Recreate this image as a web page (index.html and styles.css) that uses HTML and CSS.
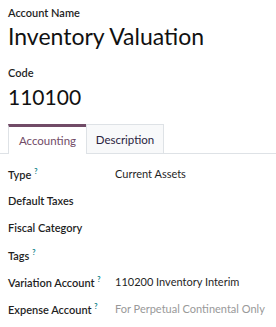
FILE: index.html
```html
<!DOCTYPE html>
<html lang="en">
<head>
  <meta charset="UTF-8" />
  <title>Account</title>
  <link rel="stylesheet" href="styles.css">
</head>
<body>
  <div class="sheet">
    <div class="field-label">Account Name</div>
    <div class="title">Inventory Valuation</div>

    <div class="field-label code-label">Code</div>
    <div class="code">110100</div>

    <!-- tabs -->
    <div class="tabs">
      <div class="tab active">Accounting</div>
      <div class="tab">Description</div>
    </div>

    <div class="rows">
      <div class="row">
        <div class="label">Type <sup>?</sup></div>
        <div class="value">Current Assets</div>
      </div>
      <div class="row">
        <div class="label">Default Taxes</div>
        <div class="value"></div>
      </div>
      <div class="row">
        <div class="label">Fiscal Category</div>
        <div class="value"></div>
      </div>
      <div class="row">
        <div class="label">Tags <sup>?</sup></div>
        <div class="value"></div>
      </div>
      <div class="row">
        <div class="label">Variation Account <sup>?</sup></div>
        <div class="value">110200 Inventory Interim</div>
      </div>
      <div class="row">
        <div class="label">Expense Account <sup>?</sup></div>
        <div class="value placeholder">For Perpetual Continental Only</div>
      </div>
    </div>
  </div>
</body>
</html>
```

FILE: styles.css
```css
body {
  margin: 0;
  font-family: Lato, "Open Sans", Arial, sans-serif;
  color: #1f1f1f;
  background: #fff;
}
.sheet {
  padding-top: 6px;
}
.field-label {
  font-size: 11px;
  font-weight: 600;
  line-height: 14px;
  padding-left: 8px;
  white-space: nowrap;
}
.title {
  margin-top: 2px;
  font-size: 23px;
  line-height: 28px;
  padding-left: 8px;
  color: #111;
}
.code-label {
  margin-top: 16px;
}
.code {
  margin-top: 4px;
  font-size: 21px;
  line-height: 26px;
  padding-left: 8px;
  color: #111;
}

/* tabs */
.tabs {
  display: flex;
  margin-top: 14px;
  padding-left: 8px;
  border-bottom: 1px solid #dee2e6;
}
.tab {
  width: 78px;
  height: 29px;
  box-sizing: border-box;
  display: flex;
  align-items: center;
  justify-content: center;
  font-size: 11.5px;
  color: #2a2340;
  background: #f8f9fa;
  border: 1px solid #dee2e6;
  border-bottom: none;
  margin-bottom: -1px;
  padding-top: 1px;
}
.tab.active {
  height: 30px;
  background: #fff;
  color: #714b67;
  border-top: 3px solid #714b67;
  border-right: none;
  padding-top: 0;
}

.rows {
  padding: 6px 0 0 8px;
}
.row {
  display: flex;
  height: 27px;
  align-items: center;
  font-size: 11px;
  white-space: nowrap;
}
.label {
  width: 107px;
  font-weight: 600;
}
.label sup {
  font-size: 7px;
  font-weight: 700;
  color: #017e84;
  vertical-align: 5px;
}
.placeholder {
  color: #999;
}
```
